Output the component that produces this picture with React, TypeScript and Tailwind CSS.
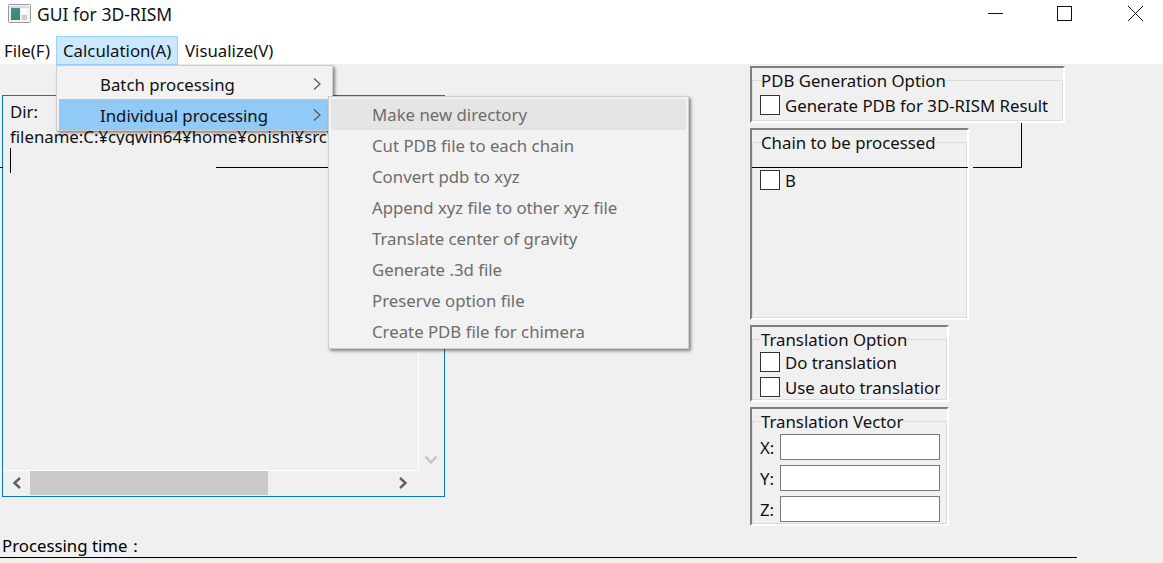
import type { ReactNode } from "react"

const Check = ({ label }: { label: string }) => (
  <div className="flex items-center gap-[5px] h-[25px] whitespace-nowrap overflow-hidden">
    <span className="w-5 h-5 shrink-0 bg-white border border-[#333333]" />
    <span className="pt-[3px]">{label}</span>
  </div>
)

const Group = ({ title, className, children }: { title: string; className: string; children: ReactNode }) => (
  <div className={`border-2 border-t-[#808080] border-l-[#808080] border-r-white border-b-white ${className}`}>
    <fieldset className="h-full min-w-0 border border-[#dcdcdc] pl-[7px] pr-[6px]">
      <legend className="ml-px h-6 leading-[26px] whitespace-nowrap">{title}</legend>
      {children}
    </fieldset>
  </div>
)

const VectorRow = ({ axis }: { axis: string }) => (
  <div className="flex items-center h-[31px]">
    <span className="w-5 pt-[2px]">{axis}:</span>
    <span className="w-40 h-[26px] bg-white border border-[#7a7a7a]" />
  </div>
)

const Chevron = ({ className }: { className: string }) => (
  <svg width="10" height="14" viewBox="0 0 10 14" fill="none" stroke="currentColor" className={className}>
    <path d="M2 1.5 L8 7 L2 12.5" strokeWidth="1.2" />
  </svg>
)

const subItems = [
  "Make new directory",
  "Cut PDB file to each chain",
  "Convert pdb to xyz",
  "Append xyz file to other xyz file",
  "Translate center of gravity",
  "Generate .3d file",
  "Preserve option file",
  "Create PDB file for chimera",
]

export default function App() {
  return (
    <div className="relative w-[1163px] h-[563px] overflow-hidden bg-[#f0f0f0] text-[16.8px] text-[#111111] font-['Noto_Sans',sans-serif]">
      {/* title bar */}
      <div className="flex items-start justify-between h-[32px] bg-white">
        <div className="flex items-center h-[29px] pl-2 gap-[6px]">
          <svg width="23" height="19" viewBox="0 0 23 19" className="mt-[-3px]">
            <defs>
              <linearGradient id="ic" x1="0" y1="0" x2="0" y2="1">
                <stop offset="0" stopColor="#3f8f9a" />
                <stop offset="1" stopColor="#3a8a5c" />
              </linearGradient>
            </defs>
            <rect x="0.5" y="0.5" width="22" height="18" rx="1" fill="#f4f4f4" stroke="#9a9a9a" />
            <rect x="2" y="2" width="19" height="2" fill="#d5dcdc" />
            <rect x="3" y="4" width="9" height="12" fill="url(#ic)" />
            <rect x="14" y="5" width="5" height="5" fill="#ffffff" />
            <rect x="14" y="11" width="5" height="5" fill="#c9cfcf" />
          </svg>
          <span className="text-[17.5px]">GUI for 3D-RISM</span>
        </div>
        <div className="flex items-center pt-[6px] pr-5">
          <svg width="15" height="15" viewBox="0 0 15 15" stroke="#111111" fill="none">
            <path d="M0 7.5H15" />
          </svg>
          <svg width="15" height="15" viewBox="0 0 15 15" stroke="#111111" fill="none" className="ml-[54px]">
            <rect x="0.5" y="0.5" width="14" height="14" />
          </svg>
          <svg width="15" height="15" viewBox="0 0 15 15" stroke="#111111" fill="none" className="ml-[56px]">
            <path d="M0 0L15 15M15 0L0 15" />
          </svg>
        </div>
      </div>

      {/* menu bar */}
      <div className="flex items-start h-[32px] bg-white pl-1 pt-1 leading-[29px]">
        <span className="w-[52px]">File(F)</span>
        <span className="w-[122px] h-[29px] leading-[27px] pl-[6px] bg-[#cce8ff] border border-[#99d1ff]">Calculation(A)</span>
        <span className="ml-[7px]">Visualize(V)</span>
      </div>

      {/* main content */}
      <div className="flex h-[464px] pt-[2px]">
        <div className="w-[750px] pl-[2px] pt-[29px]">
          <div className="relative w-[443px] h-[402px] border border-[#0078d7] flex flex-col">
            <div className="flex-1 flex min-h-0">
              <div className="flex-1 border-r border-b border-white pl-[7px] pt-[3px] leading-[25px] overflow-hidden whitespace-nowrap">
                <div>Dir:</div>
                <div className="h-[21px] overflow-hidden">filename:C:¥cygwin64¥home¥onishi¥src¥3drism</div>
                <div className="w-px h-[25px] mt-[3px] bg-black" />
              </div>
              <div className="w-[25px] flex items-end justify-center pb-[6px] pr-[2px]">
                <svg width="14" height="10" viewBox="0 0 14 10" fill="none" stroke="#c4c4c4" strokeWidth="2.4">
                  <path d="M1.5 1.5L7 7.5L12.5 1.5" />
                </svg>
              </div>
            </div>
            <div className="flex items-center h-[25px] pb-px pr-[25px]">
              <div className="w-[27px] flex justify-center">
                <svg width="10" height="12" viewBox="0 0 10 12" fill="none" stroke="#606060" strokeWidth="2.4">
                  <path d="M8 1L2.5 6L8 11" />
                </svg>
              </div>
              <div className="w-[238px] h-full bg-[#cacaca]" />
              <div className="flex-1 flex justify-end pr-[11px]">
                <svg width="10" height="12" viewBox="0 0 10 12" fill="none" stroke="#606060" strokeWidth="2.4">
                  <path d="M2 1L7.5 6L2 11" />
                </svg>
              </div>
            </div>
          </div>
        </div>

        <div className="flex flex-col items-start gap-[5px]">
          <Group title="PDB Generation Option" className="w-[315px] h-[57px]">
            <Check label="Generate PDB for 3D-RISM Result" />
          </Group>
          <Group title="Chain to be processed" className="w-[219px] h-[192px]">
            <div className="pt-[13px]">
              <Check label="B" />
            </div>
          </Group>
          <Group title="Translation Option" className="w-[199px] h-[77px]">
            <div className="-mt-[2px]">
              <Check label="Do translation" />
              <Check label="Use auto translation" />
            </div>
          </Group>
          <Group title="Translation Vector" className="w-[199px] h-[119px]">
            <div className="-mt-[2px]">
              <VectorRow axis="X" />
              <VectorRow axis="Y" />
              <VectorRow axis="Z" />
            </div>
          </Group>
        </div>
      </div>

      {/* status line */}
      <div className="w-[1077px] h-[30px] pl-[2px] pt-[6px] leading-6 text-black border-b border-black">Processing time：</div>

      {/* stray lines left behind on the canvas */}
      <div className="absolute left-0 top-[167px] w-[3px] h-px bg-black" />
      <div className="absolute left-[216px] top-[167px] w-[120px] h-px bg-black" />
      <div className="absolute left-[752px] top-[167px] w-[216px] h-px bg-black" />
      <div className="absolute left-[973px] top-[167px] w-[49px] h-px bg-black" />
      <div className="absolute left-[1021px] top-[123px] w-px h-[44px] bg-black" />

      {/* open menu */}
      <div className="absolute left-[56px] top-[65px] w-[277px] h-[66px] bg-[#f2f2f2] border border-[#cccccc] p-[2px] shadow-[2px_2px_3px_rgba(0,0,0,0.45)]">
        <div className="flex items-center justify-between h-[31px] pl-[41px] pr-2">
          <span className="pt-[2px]">Batch processing</span>
          <Chevron className="text-[#555555]" />
        </div>
        <div className="flex items-center justify-between h-[31px] pl-[41px] pr-2 bg-[#91c9f7]">
          <span className="pt-[2px]">Individual processing</span>
          <Chevron className="text-[#555555]" />
        </div>
      </div>

      {/* submenu */}
      <div className="absolute left-[328px] top-[96px] w-[361px] h-[253px] bg-[#f2f2f2] border border-[#cccccc] p-[2px] text-[#6d6d6d] shadow-[2px_2px_3px_rgba(0,0,0,0.45)]">
        {subItems.map((item, i) => (
          <div key={item} className={`flex items-center h-[31px] pl-[41px] ${i === 0 ? "bg-[#e5e5e5]" : ""}`}>
            {item}
          </div>
        ))}
      </div>
    </div>
  )
}
